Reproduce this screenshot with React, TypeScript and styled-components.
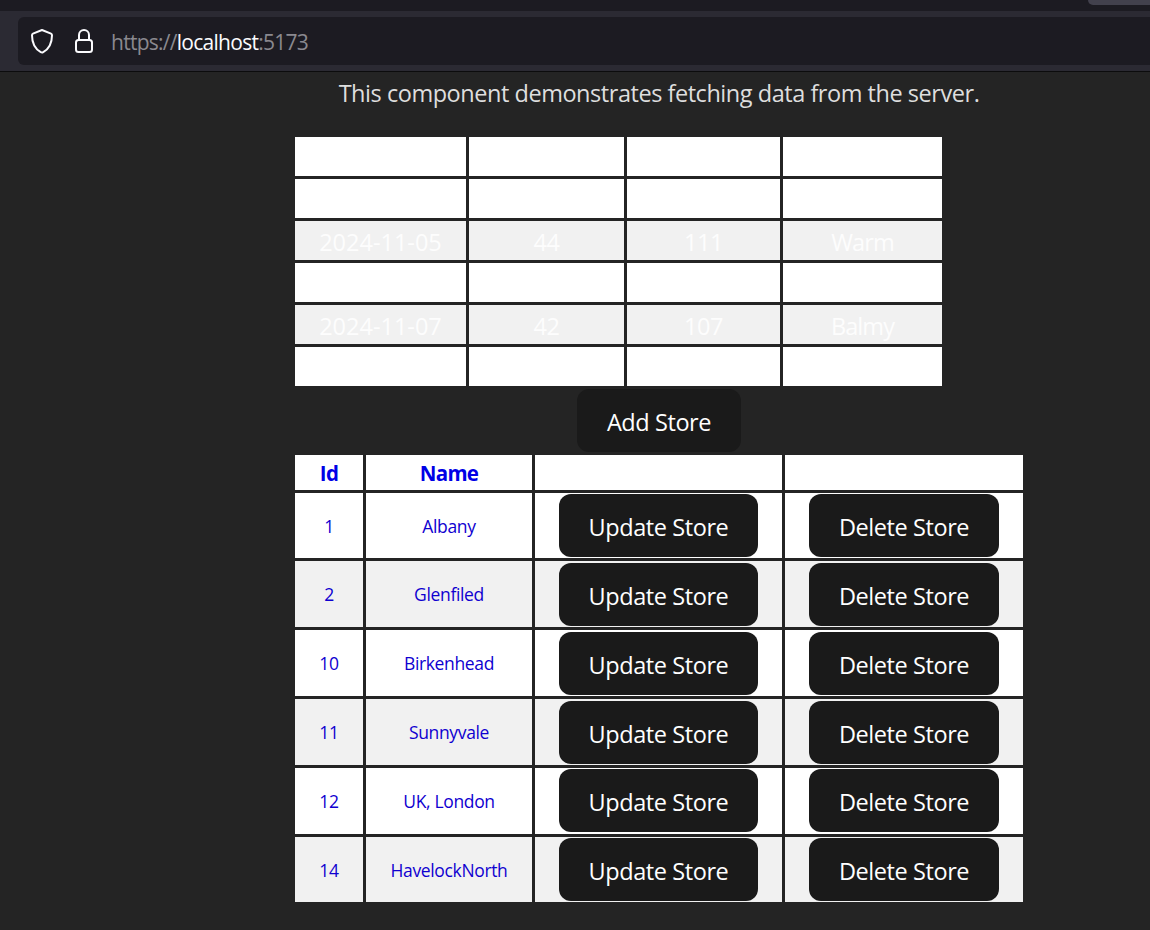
import React from "react";
import styled, { createGlobalStyle } from "styled-components";

const GlobalStyle = createGlobalStyle`
  * { box-sizing: border-box; }
  body {
    margin: 0;
    background: #242424;
    font-family: "Open Sans", "Noto Sans", sans-serif;
    overflow: hidden;
  }
`;

const Window = styled.div`
  width: 1150px;
  height: 930px;
  display: flex;
  flex-direction: column;
  overflow: hidden;
  background: #242424;
`;

const TabStrip = styled.div`
  height: 11px;
  flex: none;
  display: flex;
  justify-content: flex-end;
  background: #1c1b22;
`;

const Tab = styled.div`
  width: 62px;
  height: 5px;
  background: #42414d;
  border-bottom-left-radius: 5px;
`;

const Toolbar = styled.div`
  height: 61px;
  flex: none;
  padding: 6px 0 6px 18px;
  background: #2b2a33;
  border-bottom: 1px solid #0c0c0d;
`;

const AddressBar = styled.div`
  height: 48px;
  display: flex;
  align-items: center;
  padding-left: 12px;
  background: #1c1b22;
  border-radius: 6px 0 0 6px;
`;

const ShieldIcon = styled.svg`
  width: 24px;
  height: 26px;
  margin-right: 20px;
`;

const LockIcon = styled.svg`
  width: 20px;
  height: 26px;
  margin-right: 17px;
`;

const Url = styled.span`
  font-size: 21px;
  line-height: 30px;
  padding-top: 2px;
  letter-spacing: -0.73px;
  color: #8a898f;
  white-space: nowrap;
`;

const Host = styled.span`
  color: #fbfbfe;
`;

const Page = styled.main`
  width: 728px;
  margin-left: 295px;
  display: flex;
  flex-direction: column;
  align-items: center;
`;

const Intro = styled.p`
  margin: 0;
  height: 65px;
  padding-top: 3px;
  font-size: 23.5px;
  line-height: 36px;
  letter-spacing: -0.46px;
  color: #dedede;
  white-space: nowrap;
`;

const Table = styled.div`
  display: flex;
  flex-direction: column;
  align-self: flex-start;
  gap: 3px;
`;

const Row = styled.div<{ $columns: string; $height: number; $shaded?: boolean }>`
  display: grid;
  grid-template-columns: ${(p) => p.$columns};
  grid-template-rows: 100%;
  column-gap: 3px;
  height: ${(p) => p.$height}px;
  --cell: ${(p) => (p.$shaded ? "#f1f1f1" : "#ffffff")};
`;

const ForecastCell = styled.div<{ $spacing: number }>`
  display: flex;
  justify-content: center;
  padding-top: 3px;
  background: var(--cell);
  color: #fdfdfd;
  font-size: 23.5px;
  line-height: 36px;
  letter-spacing: ${(p) => p.$spacing}px;
  white-space: nowrap;
`;

const StoreCell = styled.div`
  display: flex;
  align-items: center;
  justify-content: center;
  background: var(--cell);
  color: #0f00d0;
  font-size: 17.5px;
  line-height: 26px;
  letter-spacing: -0.35px;
  white-space: nowrap;
`;

const StoreHeading = styled(StoreCell)`
  color: #0000e6;
  font-size: 20.5px;
  font-weight: 700;
  letter-spacing: -0.7px;
`;

const ActionCell = styled.div<{ $top?: number }>`
  display: flex;
  align-items: flex-start;
  justify-content: center;
  padding-top: ${(p) => p.$top ?? 0}px;
  background: var(--cell);
`;

const Button = styled.button<{ $width: number }>`
  width: ${(p) => p.$width}px;
  height: 63px;
  padding: 2px 0 0;
  border: 0;
  border-radius: 12px;
  background: #1a1a1a;
  color: #ffffff;
  font-family: inherit;
  font-size: 23.5px;
  line-height: 36px;
  letter-spacing: -0.42px;
  white-space: nowrap;
`;

const AddArea = styled.div`
  height: 69px;
  padding-top: 3px;
`;

const forecastColumns = "171px 155px 153px 159px";
const storeColumns = "68px 166px 247px 238px";
const columnSpacing = [0, -0.4, -0.4, -0.9];

const forecasts: string[][] = [
  ["", "", "", ""],
  ["", "", "", ""],
  ["2024-11-05", "44", "111", "Warm"],
  ["", "", "", ""],
  ["2024-11-07", "42", "107", "Balmy"],
  ["", "", "", ""],
];

const stores = [
  { id: 1, name: "Albany", height: 65, top: 1 },
  { id: 2, name: "Glenfiled", height: 66, top: 2 },
  { id: 10, name: "Birkenhead", height: 66, top: 2 },
  { id: 11, name: "Sunnyvale", height: 66, top: 2 },
  { id: 12, name: "UK, London", height: 66, top: 1 },
  { id: 14, name: "HavelockNorth", height: 65, top: 1 },
];

export default function App() {
  return (
    <Window>
      <GlobalStyle />
      <TabStrip>
        <Tab />
      </TabStrip>
      <Toolbar>
        <AddressBar>
          <ShieldIcon viewBox="0 0 24 26" fill="none" stroke="#fbfbfe" strokeWidth="2" strokeLinejoin="round">
            <path d="M12 2 L21 5.6 Q22 6 22 7.2 C22 14.5 19.5 20.5 13.2 24.2 Q12 24.9 10.8 24.2 C4.5 20.5 2 14.5 2 7.2 Q2 6 3 5.6 Z" />
          </ShieldIcon>
          <LockIcon viewBox="0 0 20 26" fill="none" stroke="#fbfbfe" strokeWidth="2">
            <rect x="2" y="12" width="16" height="12" rx="2.5" />
            <path d="M5 12 V7 A5 5 0 0 1 15 7 V12" />
          </LockIcon>
          <Url>
            https://<Host>localhost</Host>:5173
          </Url>
        </AddressBar>
      </Toolbar>
      <Page>
        <Intro>This component demonstrates fetching data from the server.</Intro>
        <Table>
          {forecasts.map((cells, i) => (
            <Row key={i} $columns={forecastColumns} $height={39} $shaded={i === 2 || i === 4}>
              {cells.map((cell, j) => (
                <ForecastCell key={j} $spacing={columnSpacing[j]}>
                  {cell}
                </ForecastCell>
              ))}
            </Row>
          ))}
        </Table>
        <AddArea>
          <Button $width={164}>Add Store</Button>
        </AddArea>
        <Table>
          <Row $columns={storeColumns} $height={35}>
            <StoreHeading>Id</StoreHeading>
            <StoreHeading>Name</StoreHeading>
            <ActionCell />
            <ActionCell />
          </Row>
          {stores.map((store, i) => (
            <Row key={store.id} $columns={storeColumns} $height={store.height} $shaded={i % 2 === 1}>
              <StoreCell>{store.id}</StoreCell>
              <StoreCell>{store.name}</StoreCell>
              <ActionCell $top={store.top}>
                <Button $width={199}>Update Store</Button>
              </ActionCell>
              <ActionCell $top={store.top}>
                <Button $width={190}>Delete Store</Button>
              </ActionCell>
            </Row>
          ))}
        </Table>
      </Page>
    </Window>
  );
}
